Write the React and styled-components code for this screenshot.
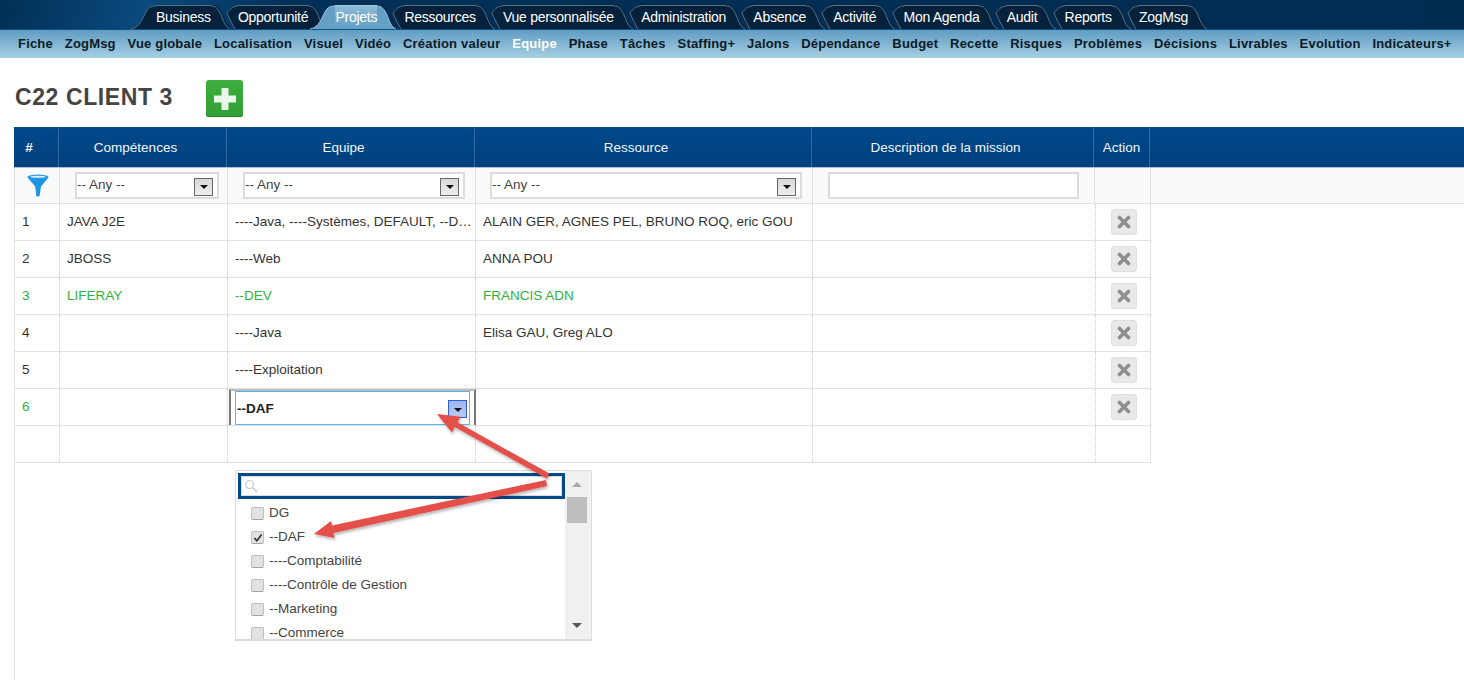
import React from "react";
import styled, { createGlobalStyle } from "styled-components";

const GlobalStyle = createGlobalStyle`
  html, body { margin: 0; padding: 0; background: #fff; }
  body { font-family: "Liberation Sans", Arial, sans-serif; font-size: 13.5px; color: #333; }
`;

const Page = styled.div`
  position: relative;
  width: 1464px;
  height: 680px;
  overflow: hidden;
`;

const TopBar = styled.div`
  height: 30px;
  box-sizing: border-box;
  padding: 6px 0 0 156px;
  display: flex;
  gap: 27.3px;
  background: linear-gradient(100deg, #003056 0%, #0b4a7d 10%, #023058 20%, #022b50 100%);
  border-bottom: 1px solid #104f85;
`;

const Tab = styled.div`
  position: relative;
  z-index: ${(p) => p.$z};
  height: 23px;
  line-height: 22px;
  font-size: 14px;
  letter-spacing: -0.27px;
  white-space: nowrap;
  color: #fff;
  background: ${(p) => (p.$active ? "linear-gradient(#8dbbd8, #5f9dc3)" : "#05213b")};
  box-shadow: 0 -1px 0 ${(p) => (p.$active ? "#9cc4dc" : "#5a6f80")};
  box-sizing: border-box;
`;

const Wing = styled.svg`
  position: absolute;
  top: -1px;
  ${(p) => (p.$side === "left" ? "right: 100%;" : "left: 100%;")}
  z-index: -1;
`;

const SubBar = styled.div`
  height: 28px;
  box-sizing: border-box;
  padding: 6px 0 0 18px;
  display: flex;
  gap: 11.85px;
  background: linear-gradient(#609cc2, #a6cfe4);
`;

const SubItem = styled.span`
  font-weight: bold;
  font-size: 13px;
  letter-spacing: 0.19px;
  white-space: nowrap;
  color: ${(p) => (p.$active ? "#fff" : "#0c1a26")};
`;

const TitleRow = styled.div`
  display: flex;
  align-items: center;
  height: 69px;
  box-sizing: border-box;
  padding: 12px 0 0 15px;
`;

const Title = styled.h1`
  margin: 0 0 3px;
  width: 191px;
  font-size: 23px;
  font-weight: bold;
  letter-spacing: 0.6px;
  color: #444;
`;

const AddButton = styled.div`
  width: 37px;
  height: 37px;
  border-radius: 3px;
  background: linear-gradient(#3cae3c, #339f36);
  box-shadow: inset 0 -1px 0 #2a8a2e;
  display: flex;
  align-items: center;
  justify-content: center;
`;

const Content = styled.div`
  margin-left: 14px;
  border-left: 1px solid #e2e2e2;
  height: 553px;
`;

const HeadRow = styled.div`
  display: grid;
  grid-template-columns: 45px 168px 248px 337px 282px 56px;
  height: 41px;
  margin-left: -1px;
  background: linear-gradient(#004a8b, #003f7c);
  border-bottom: 1px solid #a9c1d8;
  box-sizing: border-box;
`;

const HeadCell = styled.div`
  display: flex;
  align-items: center;
  justify-content: center;
  color: #f2f6fa;
  font-size: 13.5px;
  padding: 0 ${(p) => (p.$flush ? 0 : 14)}px 0 0;
  font-weight: ${(p) => (p.$bold ? "bold" : "normal")};
  border-right: 1px solid #2f6ba3;
`;

const FilterRow = styled.div`
  display: grid;
  grid-template-columns: 45px 168px 248px 337px 282px 56px;
  height: 36px;
  box-sizing: border-box;
  background: #fafafa;
  border-bottom: 1px solid #e2e2e2;
`;

const FilterCell = styled.div`
  display: flex;
  align-items: center;
  justify-content: ${(p) => (p.$center ? "center" : "flex-start")};
  padding-left: ${(p) => (p.$center ? 2 : p.$pad || 15)}px;
  border-right: 1px solid #e2e2e2;
  box-sizing: border-box;
`;

const FakeSelect = styled.div`
  box-sizing: border-box;
  width: ${(p) => p.$w}px;
  height: 27px;
  background: #fff;
  border: 2px solid #dcdcdc;
  display: flex;
  align-items: center;
  justify-content: space-between;
  padding: 0 4px 0 0;
  color: #444;
  font-size: 13.5px;
  line-height: 20px;
`;

const SelectText = styled.span`
  margin-bottom: 1px;
`;

const Caret = styled.span`
  box-sizing: border-box;
  width: 19px;
  height: 18px;
  margin-top: 2px;
  border: 1px solid ${(p) => (p.$focus ? "#2f5fdc" : "#666")};
  background: ${(p) => (p.$focus ? "linear-gradient(#9db8f0, #b9caf0)" : "linear-gradient(#d8d8d8, #eeeeee)")};
  display: flex;
  align-items: center;
  justify-content: center;
  &::after {
    content: "";
    border-left: 4px solid transparent;
    border-right: 4px solid transparent;
    border-top: 4px solid #111;
    margin-top: 1px;
  }
`;

const Row = styled.div`
  display: grid;
  grid-template-columns: 45px 168px 248px 337px 283px 55px;
  height: 37px;
  box-sizing: border-box;
  width: 1136px;
  border-bottom: 1px solid #e2e2e2;
  color: ${(p) => (p.$green ? "#2eb33e" : "#333")};
`;

const Cell = styled.div`
  display: flex;
  align-items: center;
  padding: 0 7px 2px;
  box-sizing: border-box;
  min-width: 0;
  border-right: 1px dotted #cfcfcf;
`;

const NumCell = styled(Cell)`
  color: ${(p) => (p.$green ? "#2eb33e" : "#333")};
`;

const ActionCell = styled(Cell)`
  padding: 0 0 1px 15px;
`;

const CellText = styled.span`
  white-space: nowrap;
`;

const DeleteButton = styled.div`
  width: 26px;
  height: 26px;
  border-radius: 3px;
  background: #e9e9e9;
  border: 1px solid #e0e0e0;
  box-sizing: border-box;
  display: flex;
  align-items: center;
  justify-content: center;
`;

const EditCell = styled.div`
  box-sizing: border-box;
  border-top: 2px solid #bdbdbd;
  border-left: 2px solid #777;
  border-right: 2px solid #777;
  padding: 0 4px;
  margin: 0 0 0 1px;
  min-width: 0;
`;

const EditInput = styled.div`
  box-sizing: border-box;
  height: 100%;
  border: 1px solid #5ab4ee;
  display: flex;
  align-items: center;
  justify-content: space-between;
  padding: 0 2px 0 1px;
  font-weight: bold;
  color: #222;
`;

const Popup = styled.div`
  position: absolute;
  left: 235px;
  top: 470px;
  width: 357px;
  height: 171px;
  box-sizing: border-box;
  background: #fff;
  border: 1px solid #dcdcdc;
  border-bottom-width: 2px;
  display: flex;
  overflow: hidden;
`;

const PopupMain = styled.div`
  flex: 1;
  padding: 2px 0 0 2px;
  min-width: 0;
`;

const SearchBox = styled.div`
  box-sizing: border-box;
  height: 26px;
  border: 3px solid #004a8a;
  box-shadow: inset 0 0 0 1px #ddd;
  display: flex;
  align-items: center;
  padding-left: 3px;
  margin-bottom: 1px;
`;

const Option = styled.div`
  display: flex;
  align-items: center;
  height: 24px;
  padding-left: 13px;
  gap: 5px;
  color: #444;
`;

const Check = styled.span`
  box-sizing: border-box;
  width: 13px;
  height: 13px;
  margin-top: 3px;
  border: 1px solid #c0c0c0;
  border-bottom-color: #a4a4a4;
  border-radius: 2px;
  background: #e2e2e2;
  display: flex;
  align-items: center;
  justify-content: center;
`;

const Scrollbar = styled.div`
  position: relative;
  width: 26px;
  background: #f0f0f0;
`;

const Thumb = styled.div`
  position: absolute;
  left: 2px;
  top: 26px;
  width: 20px;
  height: 26px;
  background: #bdbdbd;
`;

const ScrollArrow = styled.div`
  position: absolute;
  left: 7px;
  ${(p) => (p.$up ? "top: 11px;" : "bottom: 11px;")}
  border-left: 5px solid transparent;
  border-right: 5px solid transparent;
  ${(p) => (p.$up ? "border-bottom: 5px solid #aaa;" : "border-top: 5px solid #555;")}
`;

const ArrowLayer = styled.svg`
  position: absolute;
  left: 0;
  top: 0;
  pointer-events: none;
`;

const tabs = ["Business", "Opportunité", "Projets", "Ressources", "Vue personnalisée", "Administration", "Absence", "Activité", "Mon Agenda", "Audit", "Reports", "ZogMsg"];
const subItems = ["Fiche", "ZogMsg", "Vue globale", "Localisation", "Visuel", "Vidéo", "Création valeur", "Equipe", "Phase", "Tâches", "Staffing+", "Jalons", "Dépendance", "Budget", "Recette", "Risques", "Problèmes", "Décisions", "Livrables", "Evolution", "Indicateurs+"];

const rows = [
  { n: 1, skill: "JAVA J2E", team: "----Java, ----Systèmes, DEFAULT, --D…", who: "ALAIN GER, AGNES PEL, BRUNO ROQ, eric GOU" },
  { n: 2, skill: "JBOSS", team: "----Web", who: "ANNA POU" },
  { n: 3, skill: "LIFERAY", team: "--DEV", who: "FRANCIS ADN", green: true },
  { n: 4, skill: "", team: "----Java", who: "Elisa GAU, Greg ALO" },
  { n: 5, skill: "", team: "----Exploitation", who: "" },
];

const options = ["DG", "--DAF", "----Comptabilité", "----Contrôle de Gestion", "--Marketing", "--Commerce"];

// the curved tab ends, a wide slope for the first and active tabs and a short hook for the others
const TabLeft = ({ wide, fill, line }) =>
  wide ? (
    <Wing $side="left" width="26" height="25" viewBox="0 0 26 25">
      <path d="M26 1C18 1 17 5 14 11C11 17 8 23 1 24H26z" fill={fill} />
      <path d="M26 1C18 1 17 5 14 11C11 17 8 23 1 24" fill="none" stroke={line} />
    </Wing>
  ) : (
    <Wing $side="left" width="12" height="25" viewBox="0 0 12 25">
      <path d="M12 1C7 1 4 4 1 8C3 13 6 19 9 24H12z" fill={fill} />
      <path d="M12 1C7 1 4 4 1 8C3 13 6 19 9 24" fill="none" stroke={line} />
    </Wing>
  );

const TabRight = ({ fill, line, gap }) => (
  <Wing $side="right" width="20" height="25" viewBox="0 0 20 25">
    <path d="M0 1C5 1 7 4 10 10C12 15 14 22 19 24H0z" fill={fill} />
    <path d="M1 0C6 0 8 3 11 9C13 14 15 21 20 23" fill="none" stroke={gap} strokeWidth="2" />
    <path d="M0 1C5 1 7 4 10 10C12 15 14 22 19 24" fill="none" stroke={line} />
  </Wing>
);

const PlusIcon = () => (
  <svg width="28" height="28" viewBox="0 0 28 28">
    <path d="M10.5 3h7v7.5H25v7h-7.5V25h-7v-7.5H3v-7h7.5z" fill="#e9f6e9" />
  </svg>
);

const CrossIcon = () => (
  <svg width="14" height="14" viewBox="0 0 14 14">
    <path d="M2.5 2.5l9 9M11.5 2.5l-9 9" stroke="#8e8e8e" strokeWidth="3.6" strokeLinecap="round" />
  </svg>
);

const FunnelIcon = () => (
  <svg width="22" height="23" viewBox="0 0 22 23">
    <ellipse cx="11" cy="3" rx="10.5" ry="2.4" fill="#2b9be0" />
    <path d="M.5 3.4c4 1.6 17 1.6 21 0L14 12.5 12.6 22 9.5 22.8 8.2 12.5z" fill="#1d95e2" />
    <ellipse cx="11" cy="2.8" rx="7.5" ry="1" fill="#d8f0fb" />
  </svg>
);

const SearchIcon = () => (
  <svg width="14" height="14" viewBox="0 0 14 14" fill="none">
    <circle cx="5.5" cy="5.5" r="4" stroke="#ccc" strokeWidth="1.2" />
    <path d="M8.5 8.5l4.5 4.5" stroke="#ccc" strokeWidth="1.6" />
  </svg>
);

const CheckMark = () => (
  <svg width="10" height="10" viewBox="0 0 10 10">
    <path d="M1.5 5.2l2.4 2.6L8.6 1.6" stroke="#333" strokeWidth="1.7" fill="none" />
  </svg>
);

export default function App() {
  return (
    <Page>
      <GlobalStyle />
      <TopBar>
        {tabs.map((t, i) => {
          const active = t === "Projets";
          const fill = active ? "#659fc4" : "#05213b";
          const line = active ? "#9cc4dc" : "#5a6f80";
          return (
            <Tab key={t} $active={active} $z={active ? 20 : 12 - i}>
              <TabLeft wide={active || i === 0} fill={fill} line={line} />
              {t}
              <TabRight fill={fill} line={line} gap="#022b50" />
            </Tab>
          );
        })}
      </TopBar>
      <SubBar>
        {subItems.map((s) => (
          <SubItem key={s} $active={s === "Equipe"}>{s}</SubItem>
        ))}
      </SubBar>
      <TitleRow>
        <Title>C22 CLIENT 3</Title>
        <AddButton><PlusIcon /></AddButton>
      </TitleRow>
      <Content>
        <HeadRow>
          <HeadCell $bold>#</HeadCell>
          <HeadCell>Compétences</HeadCell>
          <HeadCell>Equipe</HeadCell>
          <HeadCell>Ressource</HeadCell>
          <HeadCell>Description de la mission</HeadCell>
          <HeadCell $flush>Action</HeadCell>
        </HeadRow>
        <FilterRow>
          <FilterCell $center><FunnelIcon /></FilterCell>
          <FilterCell><FakeSelect $w={144}><SelectText>-- Any --</SelectText><Caret /></FakeSelect></FilterCell>
          <FilterCell><FakeSelect $w={222}><SelectText>-- Any --</SelectText><Caret /></FakeSelect></FilterCell>
          <FilterCell $pad={14}><FakeSelect $w={312}><SelectText>-- Any --</SelectText><Caret /></FakeSelect></FilterCell>
          <FilterCell><FakeSelect $w={251} /></FilterCell>
          <FilterCell />
        </FilterRow>
        {rows.map((r) => (
          <Row key={r.n} $green={r.green}>
            <Cell>{r.n}</Cell>
            <Cell>{r.skill}</Cell>
            <Cell><CellText>{r.team}</CellText></Cell>
            <Cell><CellText>{r.who}</CellText></Cell>
            <Cell />
            <ActionCell><DeleteButton><CrossIcon /></DeleteButton></ActionCell>
          </Row>
        ))}
        <Row>
          <NumCell $green>6</NumCell>
          <Cell />
          <EditCell>
            <EditInput>--DAF<Caret $focus /></EditInput>
          </EditCell>
          <Cell />
          <Cell />
          <ActionCell><DeleteButton><CrossIcon /></DeleteButton></ActionCell>
        </Row>
        <Row>
          <Cell />
          <Cell />
          <Cell />
          <Cell />
          <Cell />
          <Cell />
        </Row>
      </Content>
      <Popup>
        <PopupMain>
          <SearchBox><SearchIcon /></SearchBox>
          {options.map((o) => (
            <Option key={o}>
              <Check>{o === "--DAF" && <CheckMark />}</Check>
              {o}
            </Option>
          ))}
        </PopupMain>
        <Scrollbar>
          <ScrollArrow $up />
          <Thumb />
          <ScrollArrow />
        </Scrollbar>
      </Popup>
      <ArrowLayer width="1464" height="680">
        <defs>
          <filter id="arrowShadow" x="-10%" y="-10%" width="120%" height="130%">
            <feDropShadow dx="1" dy="2" stdDeviation="1.5" floodColor="#000" floodOpacity="0.3" />
          </filter>
        </defs>
        <g filter="url(#arrowShadow)" fill="#e5504a">
          <path d="M549.4 473.6L457.6 422.3L460.6 416.8L437 414L451.8 432.6L454.8 427.1L546.6 478.4z" />
          <path d="M546 480L332 525.5L331 521L314 534L334.5 538L333.5 533L547 486z" />
        </g>
      </ArrowLayer>
    </Page>
  );
}
